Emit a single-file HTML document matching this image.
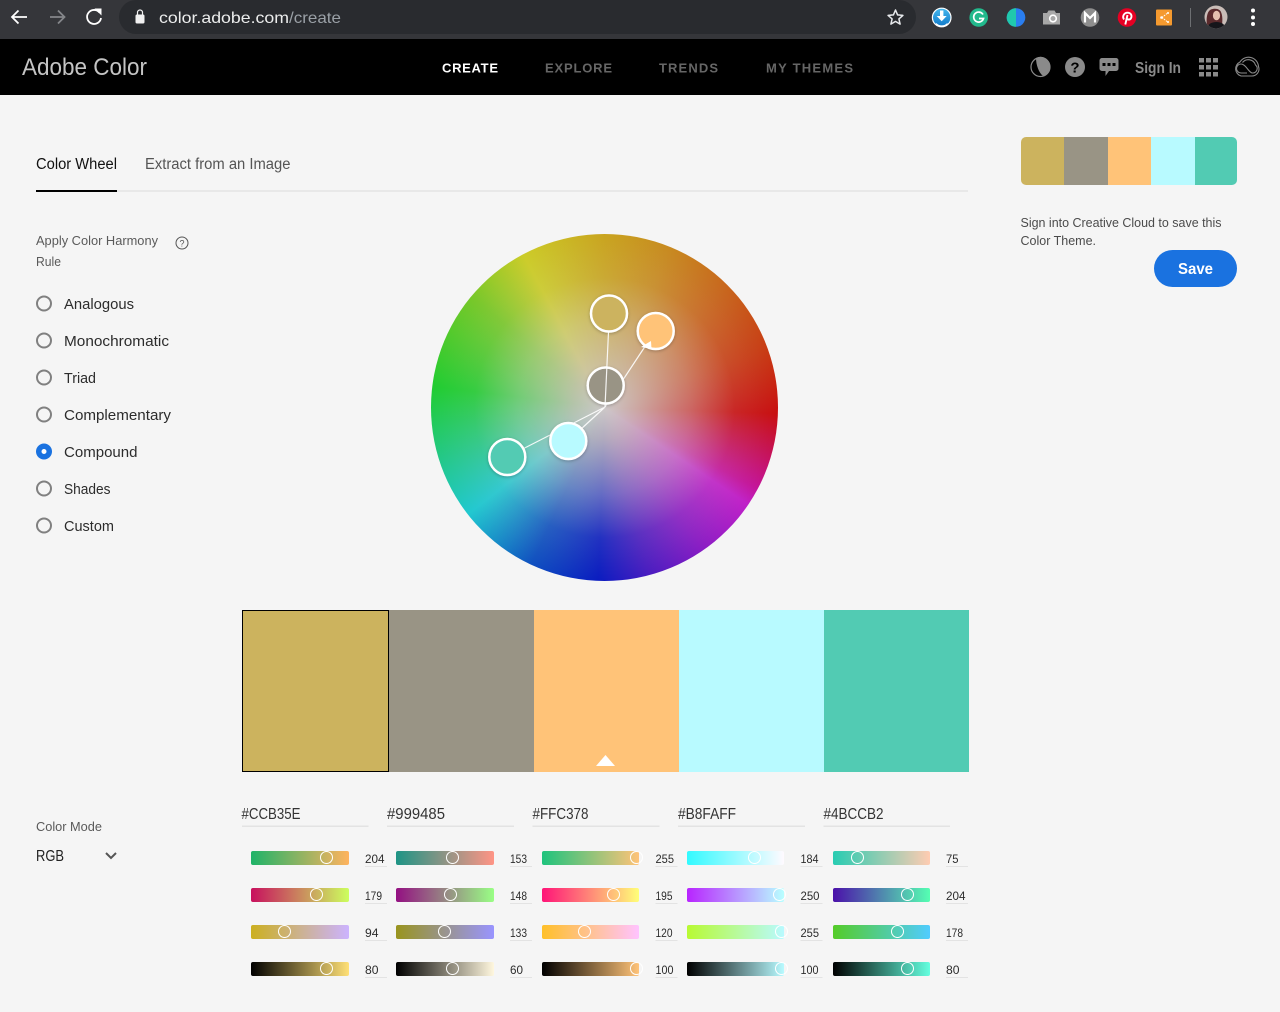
<!DOCTYPE html>
<html><head><meta charset="utf-8"><title>Adobe Color</title>
<style>
html,body{margin:0;padding:0;background:#f5f5f5}
#p{position:relative;width:1280px;height:1012px;overflow:hidden;background:#f5f5f5;font-family:"Liberation Sans",sans-serif}
#p div{position:absolute}
.t{height:14px;width:98px;border-radius:2px}
.h{width:11px;height:11px;border:1.5px solid #fff;border-radius:50%;margin:-7px 0 0 -7px;background:transparent}
svg{position:absolute;left:0;top:0}
text{font-family:"Liberation Sans",sans-serif}
.v{font-size:12px;fill:#2c2c2c}
.x{font-size:15.5px;fill:#333}
.r{font-size:15px;fill:#2c2c2c}
.n{font-size:13px;font-weight:bold;fill:#666}
</style></head><body><div id="p">
<div style="left:0;top:0;width:1280px;height:39px;background:#35363a"></div>
<div style="left:119px;top:0;width:797px;height:34px;background:#292b2f;border-radius:17px"></div>
<div style="left:0;top:39px;width:1280px;height:56px;background:#000"></div>

<div style="left:431px;top:234px;width:347px;height:347px;border-radius:50%;background:conic-gradient(from 0deg,#c9a41f 0deg,#c88a20 22deg,#c8661c 45deg,#c83c14 70deg,#c80f10 92deg,#c4149a 118deg,#c020c8 124deg,#8a1cc4 145deg,#4a1cc0 165deg,#0a1cc0 182deg,#0f50c0 205deg,#20c8d0 232deg,#22c88a 252deg,#20cc30 277deg,#78c828 310deg,#cccc28 332deg,#c9a41f 360deg)"></div>
<div style="left:431px;top:234px;width:347px;height:347px;border-radius:50%;background:radial-gradient(circle closest-side,rgba(205,200,200,1) 0%,rgba(205,195,190,.85) 18%,rgba(210,205,200,.45) 50%,rgba(210,205,200,.12) 75%,rgba(210,205,200,0) 100%)"></div>

<div style="left:242px;top:610px;width:145px;height:160px;background:#ccb35e;border:1px solid #000"></div>
<div style="left:389px;top:610px;width:145px;height:162px;background:#999485"></div>
<div style="left:534px;top:610px;width:145px;height:162px;background:#ffc378"></div>
<div style="left:679px;top:610px;width:145px;height:162px;background:#b8faff"></div>
<div style="left:824px;top:610px;width:144.500px;height:162px;background:#52cbb3"></div>

<div style="left:1021px;top:137px;width:216px;height:48px;border-radius:5px;overflow:hidden;background:linear-gradient(90deg,#ccb35e 0 43px,#999485 43px 87px,#ffc378 87px 130px,#b8faff 130px 174px,#52cbb3 174px)"></div>
<div style="left:1154px;top:250px;width:83px;height:37px;border-radius:19px;background:#1a72e0"></div>

<div style="left:36px;top:190px;width:932px;height:2px;background:#e8e8e8"></div>
<div style="left:36px;top:190px;width:81px;height:2px;background:#000"></div>

<div class="t" style="left:251px;top:851px;background:linear-gradient(90deg,rgb(30,179,104),rgb(255,179,94))"></div>
<div class="t" style="left:251px;top:888px;background:linear-gradient(90deg,rgb(200,16,94),rgb(204,255,94))"></div>
<div class="t" style="left:251px;top:925px;background:linear-gradient(90deg,rgb(204,176,32),rgb(204,179,255))"></div>
<div class="t" style="left:251px;top:962px;background:linear-gradient(90deg,#000,rgb(255,224,118))"></div>
<div class="t" style="left:396px;top:851px;background:linear-gradient(90deg,rgb(30,148,133),rgb(255,148,133))"></div>
<div class="t" style="left:396px;top:888px;background:linear-gradient(90deg,rgb(148,16,130),rgb(153,255,133))"></div>
<div class="t" style="left:396px;top:925px;background:linear-gradient(90deg,rgb(153,148,30),rgb(153,148,255))"></div>
<div class="t" style="left:396px;top:962px;background:linear-gradient(90deg,#000,rgb(255,247,222))"></div>
<div class="t" style="left:542px;top:851px;width:97px;background:linear-gradient(90deg,rgb(30,195,125),rgb(255,195,120))"></div>
<div class="t" style="left:542px;top:888px;width:97px;background:linear-gradient(90deg,rgb(255,20,120),rgb(255,255,120))"></div>
<div class="t" style="left:542px;top:925px;width:97px;background:linear-gradient(90deg,rgb(255,192,40),rgb(255,195,255))"></div>
<div class="t" style="left:542px;top:962px;width:97px;background:linear-gradient(90deg,#000,#ffc378)"></div>
<div class="t" style="left:687px;top:851px;width:97px;background:linear-gradient(90deg,rgb(50,250,255),rgb(255,250,255))"></div>
<div class="t" style="left:687px;top:888px;width:97px;background:linear-gradient(90deg,rgb(184,36,255),rgb(184,255,255))"></div>
<div class="t" style="left:687px;top:925px;width:97px;background:linear-gradient(90deg,rgb(184,250,50),rgb(184,250,255))"></div>
<div class="t" style="left:687px;top:962px;width:97px;background:linear-gradient(90deg,#000,#b8faff)"></div>
<div class="t" style="left:833px;top:851px;width:97px;background:linear-gradient(90deg,rgb(40,204,178),rgb(255,204,178))"></div>
<div class="t" style="left:833px;top:888px;width:97px;background:linear-gradient(90deg,rgb(75,16,170),rgb(85,255,178))"></div>
<div class="t" style="left:833px;top:925px;width:97px;background:linear-gradient(90deg,rgb(85,204,40),rgb(80,204,255))"></div>
<div class="t" style="left:833px;top:962px;width:97px;background:linear-gradient(90deg,#000,rgb(100,255,223))"></div>

<div class="h" style="left:326.7px;top:858px"></div>
<div class="h" style="left:317.3px;top:895px"></div>
<div class="h" style="left:284.7px;top:932px"></div>
<div class="h" style="left:326.7px;top:969px"></div>
<div class="h" style="left:452.7px;top:858px"></div>
<div class="h" style="left:450.5px;top:895px"></div>
<div class="h" style="left:444.7px;top:932px"></div>
<div class="h" style="left:452.7px;top:969px"></div>
<div class="h" style="left:636.5px;top:858px"></div>
<div class="h" style="left:614.3px;top:895px"></div>
<div class="h" style="left:584.7px;top:932px"></div>
<div class="h" style="left:636.5px;top:969px"></div>
<div class="h" style="left:755px;top:858px"></div>
<div class="h" style="left:780.3px;top:895px"></div>
<div class="h" style="left:781.7px;top:932px"></div>
<div class="h" style="left:781.7px;top:969px"></div>
<div class="h" style="left:858.3px;top:858px"></div>
<div class="h" style="left:908px;top:895px"></div>
<div class="h" style="left:897.7px;top:932px"></div>
<div class="h" style="left:908px;top:969px"></div>

<svg width="1280" height="1012" viewBox="0 0 1280 1012" xmlns="http://www.w3.org/2000/svg">
<defs>
<filter id="s" x="-30%" y="-30%" width="160%" height="160%"><feDropShadow dx="0" dy="1" stdDeviation="1.5" flood-color="#000" flood-opacity=".25"/></filter>
<linearGradient id="dl" x1="0" y1="0" x2="0" y2="1"><stop offset="0" stop-color="#45b8ee"/><stop offset="1" stop-color="#0f78c8"/></linearGradient>
<clipPath id="av"><circle cx="1216" cy="17" r="11.500"/></clipPath>
</defs>

<!-- browser -->
<g fill="none" stroke="#fff" stroke-width="1.800">
<path d="M27 17H12M18.500 10.500L12 17l6.500 6.500"/>
<path d="M50 17h14M58 10.500l6.500 6.500-6.500 6.500" stroke="#85878a"/>
<path d="M99.500 12.500A7 7 0 1 0 101 18"/>
</g>
<path d="M94.500 8.500h7v7z" fill="#fff"/>
<rect x="135.500" y="14.500" width="9" height="9" rx="1.500" fill="#f1f1f1"/>
<path d="M137.500 15v-2.500a2.500 2.500 0 0 1 5 0V15" fill="none" stroke="#f1f1f1" stroke-width="1.200"/>
<text x="159" y="23" font-size="16" fill="#eceded" textLength="130" lengthAdjust="spacingAndGlyphs">color.adobe.com</text>
<text x="289" y="23" font-size="16" fill="#9aa0a6" textLength="52" lengthAdjust="spacingAndGlyphs">/create</text>
<path d="M895.500 10l2.100 4.900 5.300.5-4 3.500 1.200 5.200-4.600-2.700-4.600 2.700 1.200-5.200-4-3.500 5.300-.5z" fill="none" stroke="#e8eaed" stroke-width="1.500" stroke-linejoin="round"/>

<circle cx="941.700" cy="17.500" r="9.300" fill="url(#dl)" stroke="#fff" stroke-width="1.200"/>
<path d="M940 10.500h3.400v5.500h3.300l-5 5.300-5-5.300h3.300z" fill="#fff"/>
<path d="M936 23.500a8 8 0 0 0 11.500 0" fill="none" stroke="#fff" stroke-width="1.200"/>
<circle cx="978.700" cy="17.500" r="9.300" fill="#22b98c"/>
<path d="M983 14.500a5 5 0 1 0 .5 4H979" fill="none" stroke="#fff" stroke-width="1.700"/>
<circle cx="1016" cy="17.500" r="9.300" fill="#2a7ef0"/>
<path d="M1016 8.200a9.300 9.300 0 0 0 0 18.600z" fill="#20c9ad"/>
<path d="M1044.500 13h4l1.500-2.500h6l1.500 2.500h4v11.500h-17z" fill="#a8a8a8" transform="translate(-1.500 0)"/>
<circle cx="1053" cy="18.500" r="3.300" fill="#a8a8a8" stroke="#fff" stroke-width="1.600"/>
<circle cx="1090" cy="17.500" r="9.300" fill="#8e8e8e"/>
<path d="M1085 22.500v-9.500l5 5 5-5v9.500" fill="none" stroke="#fff" stroke-width="2.200"/>
<circle cx="1127" cy="17.500" r="9.300" fill="#e60023"/>
<path d="M1124 19.500c-2-3 0-6.800 3.500-6.800s4.800 3 3.500 5.500c-1 2-3.400 1.700-3.700.2M1127.500 15l-2.200 9.500" fill="none" stroke="#fff" stroke-width="1.900"/>
<rect x="1156" y="9.500" width="16" height="16" rx="1" fill="#f59a2f"/>
<path d="M1162 17.500l5-4M1162 17.500l5 4" stroke="#fff" stroke-width="1" stroke-dasharray="1.500 1"/>
<circle cx="1161.500" cy="17.500" r="1.300" fill="#fff"/><circle cx="1168" cy="13" r="1" fill="#fff"/><circle cx="1168" cy="22" r="1" fill="#fff"/>
<rect x="1190" y="8" width="1" height="19" fill="#6d6f72"/>
<g clip-path="url(#av)">
<rect x="1204" y="5" width="24" height="24" fill="#c9bdb8"/>
<path d="M1207 25c-1-6 0-14 4-15.500 3-1.200 7-1 9 1 2 2 3 8 2 14z" fill="#5a2a2c"/>
<ellipse cx="1216.500" cy="15.500" rx="3.600" ry="4.800" fill="#e4bfae"/>
<path d="M1206 30c1-6 6-8 10.500-8s9 2 10 8z" fill="#15151a"/>
</g>
<g fill="#fff"><circle cx="1253" cy="10.500" r="2"/><circle cx="1253" cy="17.500" r="2"/><circle cx="1253" cy="24" r="2"/></g>

<!-- header -->
<text x="22" y="75" font-size="24" fill="#c4c4c4" textLength="125" lengthAdjust="spacingAndGlyphs">Adobe Color</text>
<text x="442" y="72.500" class="n" style="fill:#fff" textLength="56" lengthAdjust="spacing">CREATE</text>
<text x="545" y="72.500" class="n" textLength="67" lengthAdjust="spacing">EXPLORE</text>
<text x="659" y="72.500" class="n" textLength="59" lengthAdjust="spacing">TRENDS</text>
<text x="766" y="72.500" class="n" textLength="87" lengthAdjust="spacing">MY THEMES</text>

<circle cx="1040.500" cy="67" r="9.500" fill="none" stroke="#8a8a8a" stroke-width="1.200"/>
<path d="M1036 58a9.500 9.500 0 0 1 14 9 9.500 9.500 0 0 1-7 9c-4-3-7-11-7-18z" fill="#8a8a8a"/>
<circle cx="1075" cy="67" r="10" fill="#8a8a8a"/>
<text x="1075" y="72.500" font-size="15" font-weight="bold" fill="#000" text-anchor="middle">?</text>
<path d="M1102 58h14a2.500 2.500 0 0 1 2.500 2.500v8a2.500 2.500 0 0 1-2.500 2.500h-7l-3.500 5v-5h-3.500a2.500 2.500 0 0 1-2.500-2.500v-8a2.500 2.500 0 0 1 2.500-2.500z" fill="#8a8a8a"/>
<g fill="#000"><rect x="1102.500" y="63" width="3" height="3"/><rect x="1107.500" y="63" width="3" height="3"/><rect x="1112.500" y="63" width="3" height="3"/></g>
<text x="1135" y="73" font-size="15.500" font-weight="bold" fill="#8a8a8a" textLength="46" lengthAdjust="spacingAndGlyphs">Sign In</text>
<g fill="#8a8a8a">
<rect x="1199" y="58" width="5" height="4.500"/><rect x="1206" y="58" width="5" height="4.500"/><rect x="1213" y="58" width="5" height="4.500"/>
<rect x="1199" y="65" width="5" height="4.500"/><rect x="1206" y="65" width="5" height="4.500"/><rect x="1213" y="65" width="5" height="4.500"/>
<rect x="1199" y="72" width="5" height="4.500"/><rect x="1206" y="72" width="5" height="4.500"/><rect x="1213" y="72" width="5" height="4.500"/>
</g>
<g fill="none" stroke="#8a8a8a" stroke-width="1.100">
<path d="M1241 76h11a7 7 0 0 0 6.500-9.500A10 10 0 0 0 1240 62a7.500 7.500 0 0 0 1 14z"/>
<path d="M1241 73a4.500 4.500 0 0 1 0-9c3 0 5 3 7 5.500s3 3.500 4.500 3.500a4.500 4.500 0 0 0 3-8 7.500 7.500 0 0 0-13-2.500M1241 73h6"/>
</g>

<!-- tabs + left -->
<text x="36" y="169" font-size="15.500" fill="#111" textLength="81" lengthAdjust="spacingAndGlyphs">Color Wheel</text>
<text x="145" y="169" font-size="15.500" fill="#555" textLength="145.500" lengthAdjust="spacingAndGlyphs">Extract from an Image</text>
<text x="36" y="245" font-size="12.500" fill="#5a5a5a" textLength="122" lengthAdjust="spacingAndGlyphs">Apply Color Harmony</text>
<text x="36" y="266" font-size="12.500" fill="#5a5a5a" textLength="25" lengthAdjust="spacingAndGlyphs">Rule</text>
<circle cx="182" cy="243" r="6" fill="none" stroke="#555" stroke-width="1"/>
<text x="182" y="246.500" font-size="9" fill="#555" text-anchor="middle">?</text>
<g fill="none" stroke="#808080" stroke-width="2">
<circle cx="44" cy="303.500" r="7"/><circle cx="44" cy="340.500" r="7"/><circle cx="44" cy="377.500" r="7"/><circle cx="44" cy="414.500" r="7"/><circle cx="44" cy="488.500" r="7"/><circle cx="44" cy="525.500" r="7"/>
</g>
<circle cx="44" cy="451.500" r="8" fill="#1a72e0"/><circle cx="44" cy="451.500" r="2.500" fill="#fff"/>
<text x="64" y="309" class="r" textLength="70" lengthAdjust="spacingAndGlyphs">Analogous</text>
<text x="64" y="346" class="r" textLength="105" lengthAdjust="spacingAndGlyphs">Monochromatic</text>
<text x="64" y="383" class="r" textLength="32" lengthAdjust="spacingAndGlyphs">Triad</text>
<text x="64" y="420" class="r" textLength="107" lengthAdjust="spacingAndGlyphs">Complementary</text>
<text x="64" y="457" class="r" textLength="73.500" lengthAdjust="spacingAndGlyphs">Compound</text>
<text x="64" y="494" class="r" textLength="46.500" lengthAdjust="spacingAndGlyphs">Shades</text>
<text x="64" y="531" class="r" textLength="50" lengthAdjust="spacingAndGlyphs">Custom</text>
<text x="36" y="831" font-size="12.500" fill="#5a5a5a" textLength="66" lengthAdjust="spacingAndGlyphs">Color Mode</text>
<text x="36" y="861" font-size="15.500" fill="#222" textLength="28" lengthAdjust="spacingAndGlyphs">RGB</text>
<path d="M106 853l5 5 5-5" fill="none" stroke="#555" stroke-width="2"/>

<!-- wheel handles -->
<g stroke="#fff" stroke-width="1.200" fill="none" opacity=".9">
<path d="M605 407L646 345M605 407L507 457M605 407L568 441"/>
</g>
<g stroke="#fff" stroke-width="2.500">
<circle cx="609" cy="313.500" r="18" fill="#ccb35e" filter="url(#s)"/>
<circle cx="655.700" cy="331" r="18" fill="#ffc378" filter="url(#s)"/>
<circle cx="605.700" cy="385.500" r="18" fill="#999485" filter="url(#s)"/>
<circle cx="568.300" cy="441" r="18" fill="#b8faff" filter="url(#s)"/>
<circle cx="507.300" cy="457" r="18" fill="#52cbb3" filter="url(#s)"/>
</g>
<path d="M605 407L608.500 332" stroke="#fff" stroke-width="1.200" opacity=".9"/>
<path d="M641 347l10-6 .5 8z" fill="#fff"/>

<!-- swatch triangle -->
<path d="M596 766l9.500-11 9.500 11z" fill="#fff"/>

<!-- right -->
<text x="1020.500" y="227" font-size="13" fill="#4b4b4b" textLength="201" lengthAdjust="spacingAndGlyphs">Sign into Creative Cloud to save this</text>
<text x="1020.500" y="245" font-size="13" fill="#4b4b4b" textLength="75.500" lengthAdjust="spacingAndGlyphs">Color Theme.</text>
<text x="1178" y="274" font-size="15.500" font-weight="bold" fill="#fff" textLength="35" lengthAdjust="spacingAndGlyphs">Save</text>

<!-- hex -->
<g fill="#e3e3e3">
<rect x="242" y="825.500" width="126.500" height="1.500"/><rect x="387" y="825.500" width="127" height="1.500"/><rect x="532.500" y="825.500" width="127" height="1.500"/><rect x="678" y="825.500" width="127" height="1.500"/><rect x="823.500" y="825.500" width="126.500" height="1.500"/>
</g>
<text x="241.500" y="819" class="x" textLength="59" lengthAdjust="spacingAndGlyphs">#CCB35E</text>
<text x="387" y="819" class="x" textLength="58" lengthAdjust="spacingAndGlyphs">#999485</text>
<text x="532.500" y="819" class="x" textLength="56" lengthAdjust="spacingAndGlyphs">#FFC378</text>
<text x="678" y="819" class="x" textLength="58" lengthAdjust="spacingAndGlyphs">#B8FAFF</text>
<text x="823.500" y="819" class="x" textLength="60" lengthAdjust="spacingAndGlyphs">#4BCCB2</text>

<!-- value underlines -->
<g fill="#e3e3e3">
<rect x="365" y="866" width="22" height="1"/><rect x="365" y="903" width="22" height="1"/><rect x="365" y="940" width="22" height="1"/><rect x="365" y="977" width="22" height="1"/>
<rect x="510" y="866" width="22" height="1"/><rect x="510" y="903" width="22" height="1"/><rect x="510" y="940" width="22" height="1"/><rect x="510" y="977" width="22" height="1"/>
<rect x="655.500" y="866" width="22" height="1"/><rect x="655.500" y="903" width="22" height="1"/><rect x="655.500" y="940" width="22" height="1"/><rect x="655.500" y="977" width="22" height="1"/>
<rect x="800.500" y="866" width="22" height="1"/><rect x="800.500" y="903" width="22" height="1"/><rect x="800.500" y="940" width="22" height="1"/><rect x="800.500" y="977" width="22" height="1"/>
<rect x="946" y="866" width="22" height="1"/><rect x="946" y="903" width="22" height="1"/><rect x="946" y="940" width="22" height="1"/><rect x="946" y="977" width="22" height="1"/>
</g>
<g>
<text class="v" x="365" y="863" textLength="19.500" lengthAdjust="spacingAndGlyphs">204</text>
<text class="v" x="365" y="900" textLength="17" lengthAdjust="spacingAndGlyphs">179</text>
<text class="v" x="365" y="937" textLength="13.500" lengthAdjust="spacingAndGlyphs">94</text>
<text class="v" x="365" y="974" textLength="13.500" lengthAdjust="spacingAndGlyphs">80</text>
<text class="v" x="510" y="863" textLength="17" lengthAdjust="spacingAndGlyphs">153</text>
<text class="v" x="510" y="900" textLength="17" lengthAdjust="spacingAndGlyphs">148</text>
<text class="v" x="510" y="937" textLength="17" lengthAdjust="spacingAndGlyphs">133</text>
<text class="v" x="510" y="974" textLength="13" lengthAdjust="spacingAndGlyphs">60</text>
<text class="v" x="655.500" y="863" textLength="18.500" lengthAdjust="spacingAndGlyphs">255</text>
<text class="v" x="655.500" y="900" textLength="17" lengthAdjust="spacingAndGlyphs">195</text>
<text class="v" x="655.500" y="937" textLength="17" lengthAdjust="spacingAndGlyphs">120</text>
<text class="v" x="655.500" y="974" textLength="18" lengthAdjust="spacingAndGlyphs">100</text>
<text class="v" x="800.500" y="863" textLength="18" lengthAdjust="spacingAndGlyphs">184</text>
<text class="v" x="800.500" y="900" textLength="19" lengthAdjust="spacingAndGlyphs">250</text>
<text class="v" x="800.500" y="937" textLength="18.500" lengthAdjust="spacingAndGlyphs">255</text>
<text class="v" x="800.500" y="974" textLength="18" lengthAdjust="spacingAndGlyphs">100</text>
<text class="v" x="946" y="863" textLength="12.500" lengthAdjust="spacingAndGlyphs">75</text>
<text class="v" x="946" y="900" textLength="19.500" lengthAdjust="spacingAndGlyphs">204</text>
<text class="v" x="946" y="937" textLength="17" lengthAdjust="spacingAndGlyphs">178</text>
<text class="v" x="946" y="974" textLength="13.500" lengthAdjust="spacingAndGlyphs">80</text>
</g>
</svg>
</div></body></html>
